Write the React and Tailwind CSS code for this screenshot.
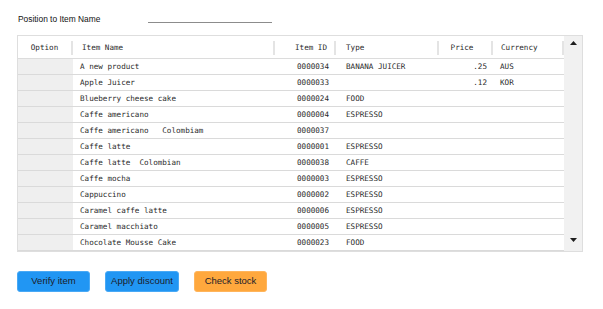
import React from "react";

const rows = [
  { name: "A new product", id: "0000034", type: "BANANA JUICER", price: ".25", cur: "AUS" },
  { name: "Apple Juicer", id: "0000033", type: "", price: ".12", cur: "KOR" },
  { name: "Blueberry cheese cake", id: "0000024", type: "FOOD", price: "", cur: "" },
  { name: "Caffe americano", id: "0000004", type: "ESPRESSO", price: "", cur: "" },
  { name: "Caffe americano   Colombiam", id: "0000037", type: "", price: "", cur: "" },
  { name: "Caffe latte", id: "0000001", type: "ESPRESSO", price: "", cur: "" },
  { name: "Caffe latte  Colombian", id: "0000038", type: "CAFFE", price: "", cur: "" },
  { name: "Caffe mocha", id: "0000003", type: "ESPRESSO", price: "", cur: "" },
  { name: "Cappuccino", id: "0000002", type: "ESPRESSO", price: "", cur: "" },
  { name: "Caramel caffe latte", id: "0000006", type: "ESPRESSO", price: "", cur: "" },
  { name: "Caramel macchiato", id: "0000005", type: "ESPRESSO", price: "", cur: "" },
  { name: "Chocolate Mousse Cake", id: "0000023", type: "FOOD", price: "", cur: "" },
];

const cols = "grid grid-cols-[55px_202px_61px_103px_54px_71px]";

// header cell with the short divider on its right edge
const HeadCell = ({ children, align = "left", pad = "" }) => (
  <div className="flex items-center h-full">
    <div
      className={`flex-1 h-[14px] border-r-2 border-[#e4e4e4] flex items-center ${pad} ${
        align === "right" ? "justify-end" : align === "center" ? "justify-center" : "justify-start"
      }`}
    >
      {children}
    </div>
  </div>
);

const App = () => {
  return (
    <div className="w-[603px] h-[309px] bg-white pl-[17px] pt-[11px] font-['Liberation_Sans',sans-serif]">
      {/* position input */}
      <div className="flex items-end h-[12px]">
        <span className="ml-[1px] text-[8.4px] leading-none text-[#111]">Position to Item Name</span>
        <div className="ml-[48px] w-[124px] border-b border-[#8c8c8c]" />
      </div>

      {/* grid */}
      <div className="mt-[12px] w-[566px] flex border border-[#dedede] font-['DejaVu_Sans_Mono',monospace] text-[7.6px] text-[#2a2a2a]">
        <div className="flex-1">
          <div className={`${cols} h-[23px] border-b border-[#dcdcdc] leading-none pt-[1px]`}>
            <HeadCell align="center">Option</HeadCell>
            <HeadCell pad="pl-[9px]">Item Name</HeadCell>
            <HeadCell align="right" pad="pr-[7px]">Item ID</HeadCell>
            <HeadCell pad="pl-[10px]">Type</HeadCell>
            <HeadCell align="center" pad="pr-[6px]">Price</HeadCell>
            <HeadCell pad="pl-[8px]">Currency</HeadCell>
          </div>
          {rows.map((r, i) => (
            <div key={r.id} className={`${cols} h-[16px] leading-none border-b border-[#dadada] pt-[1px]`}>
              <div className="bg-[#efefef] -mt-[1px]" />
              <div className="flex items-center pl-[7px] whitespace-pre">{r.name}</div>
              <div className="flex items-center justify-end pr-[7px]">{r.id}</div>
              <div className="flex items-center pl-[10px]">{r.type}</div>
              <div className="flex items-center justify-end pr-[6px]">{r.price}</div>
              <div className="flex items-center pl-[7px]">{r.cur}</div>
            </div>
          ))}
        </div>

        {/* scrollbar */}
        <div className="w-[18px] bg-[#f1f1f1] flex flex-col items-center justify-between pt-[5px] pb-[9px]">
          <svg width="7" height="4" viewBox="0 0 7 4">
            <path d="M0 4 L3.5 0 L7 4 Z" fill="#1e1e1e" />
          </svg>
          <svg width="7" height="4" viewBox="0 0 7 4">
            <path d="M0 0 L7 0 L3.5 4 Z" fill="#1e1e1e" />
          </svg>
        </div>
      </div>

      {/* actions */}
      <div className="mt-[19px] flex gap-[15px] text-[9.5px] text-[#1c1c2a]">
        <button className="w-[73px] h-[21px] rounded-[3px] bg-[#2196f3] border border-[#49a9f5]">Verify item</button>
        <button className="w-[74px] h-[21px] rounded-[3px] bg-[#2196f3] border border-[#49a9f5]">Apply discount</button>
        <button className="w-[73px] h-[21px] rounded-[3px] bg-[#ffa83d] border border-[#ffb55c]">Check stock</button>
      </div>
    </div>
  );
};

export default App;
